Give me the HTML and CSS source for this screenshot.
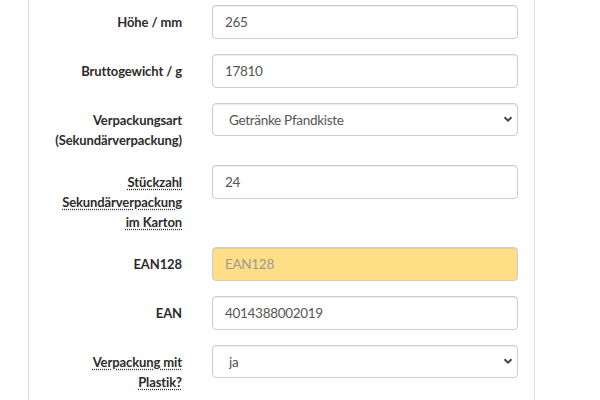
FILE: index.html
```html
<!DOCTYPE html>
<html lang="de">
<head>
<meta charset="utf-8">
<link rel="stylesheet" href="styles.css">
</head>
<body>
<div class="panel">
  <form class="form">
    <label class="lbl" for="h">Höhe / mm</label>
    <div class="ctl"><input id="h" class="field" type="text" value="265"></div>

    <label class="lbl" for="g">Bruttogewicht / g</label>
    <div class="ctl"><input id="g" class="field" type="text" value="17810"></div>

    <label class="lbl" for="v">Verpackungsart (Sekundärverpackung)</label>
    <div class="ctl sel">
      <select id="v" class="field select"><option>Getränke Pfandkiste</option></select>
      <svg class="chev" width="10" height="8" viewBox="0 0 10 8"><path d="M1.5 2.2 L5 5.6 L8.5 2.2" fill="none" stroke="#444" stroke-width="2"/></svg>
    </div>

    <label class="lbl" for="s"><abbr class="hint" title="Stückzahl Sekundärverpackung im Karton">Stückzahl Sekundärverpackung im Karton</abbr></label>
    <div class="ctl"><input id="s" class="field" type="text" value="24"></div>

    <label class="lbl" for="e128">EAN128</label>
    <div class="ctl"><input id="e128" class="field warn" type="text" placeholder="EAN128"></div>

    <label class="lbl" for="e">EAN</label>
    <div class="ctl"><input id="e" class="field" type="text" value="4014388002019"></div>

    <label class="lbl" for="p"><abbr class="hint" title="Verpackung mit Plastik?">Verpackung mit Plastik?</abbr></label>
    <div class="ctl sel">
      <select id="p" class="field select"><option>ja</option></select>
      <svg class="chev" width="10" height="8" viewBox="0 0 10 8"><path d="M1.5 2.2 L5 5.6 L8.5 2.2" fill="none" stroke="#444" stroke-width="2"/></svg>
    </div>
  </form>
</div>
</body>
</html>
```
FILE: styles.css
```css
html, body {
  margin: 0;
  padding: 0;
  background: #fff;
}
body {
  font-family: Lato, "Noto Sans", sans-serif;
  font-size: 13px;
  color: #333;
}
.panel {
  margin-left: 28px;
  width: 505px;
  height: 400px;
  border-left: 1px solid #ddd;
  border-right: 1px solid #ddd;
  padding-top: 5px;
  box-sizing: content-box;
}
.form {
  display: grid;
  grid-template-columns: 153px 306px;
  column-gap: 30px;
  row-gap: 15px;
  align-items: start;
}
.lbl {
  padding-top: 7px;
  padding-left: 24px;
  line-height: 20px;
  font-weight: bold;
  text-align: right;
  color: #2b2b2b;
  letter-spacing: -0.1px;
}
.hint {
  text-decoration: underline dotted;
  text-underline-offset: 2px;
  cursor: help;
}
.ctl {
  display: block;
}
.sel {
  position: relative;
}
.field {
  display: block;
  width: 306px;
  height: 34px;
  box-sizing: border-box;
  padding: 6px 12px;
  font-family: inherit;
  font-size: 13.5px;
  letter-spacing: -0.3px;
  line-height: 20px;
  color: #555;
  background: #fff;
  border: 1px solid #ccc;
  border-radius: 4px;
  box-shadow: inset 0 1px 1px rgba(0,0,0,.075);
  outline: none;
}
.select {
  height: 33px;
  padding-left: 16px;
  appearance: none;
  -webkit-appearance: none;
}
.chev {
  position: absolute;
  right: 5px;
  top: 12px;
  pointer-events: none;
}
.warn {
  background: #ffdf85;
}
.warn::placeholder {
  color: #999;
}
```
